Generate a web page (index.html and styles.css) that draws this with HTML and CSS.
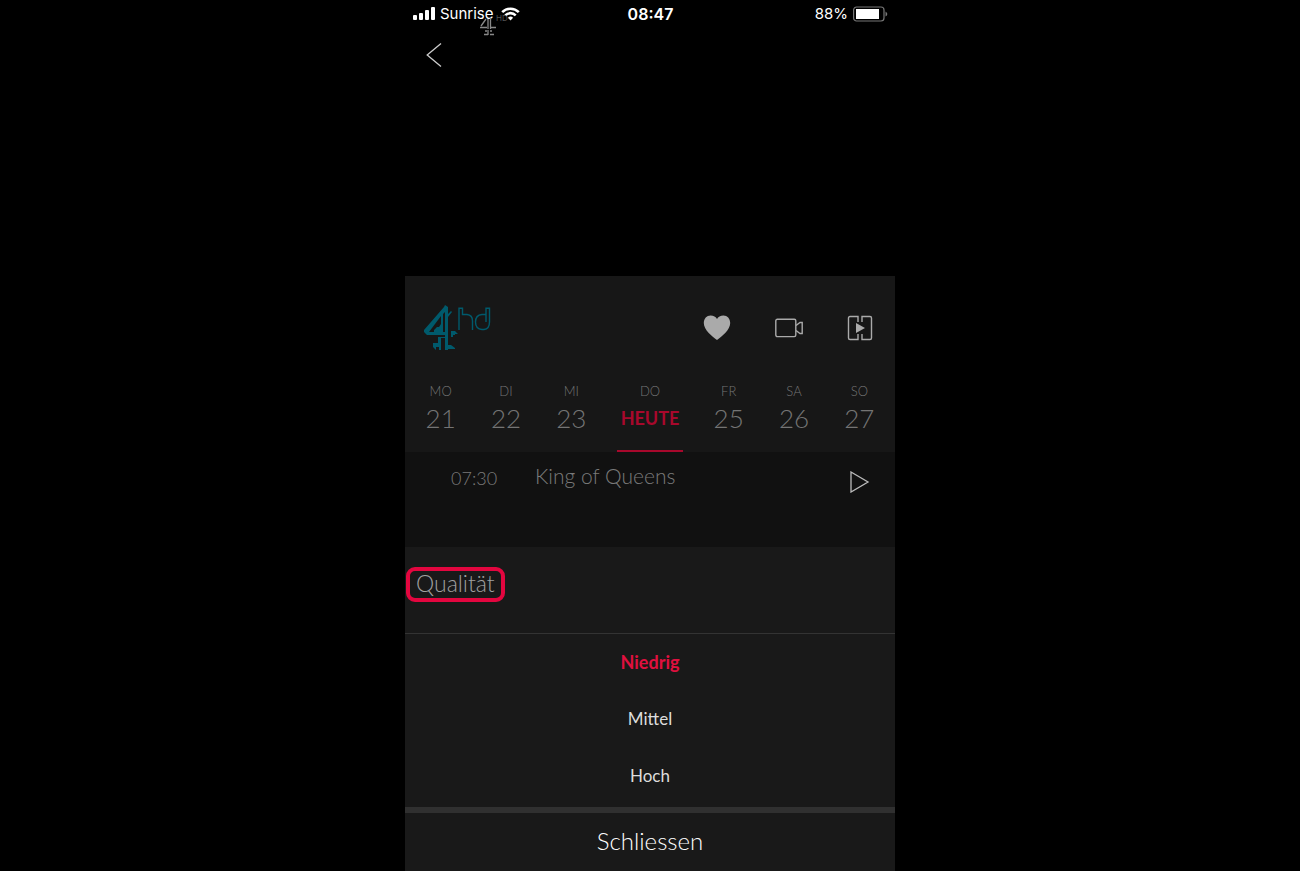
FILE: index.html
```html
<!DOCTYPE html>
<html lang="de">
<head>
  <meta charset="UTF-8">
  <title>Qualität</title>
  <meta name="viewport" content="width=device-width, initial-scale=1.0">
  <link rel="stylesheet" href="styles.css">
</head>
<body>
  <div class="phone">
    <div class="player">
      <div class="status-bar">
        <div class="status-left">
          <svg width="22" height="14" viewBox="0 0 22 14" fill="#fff">
            <rect x="0" y="8" width="4" height="5" rx="1"/>
            <rect x="6" y="6" width="4" height="7" rx="1"/>
            <rect x="12" y="3" width="4" height="10" rx="1"/>
            <rect x="18" y="0" width="4" height="13" rx="1"/>
          </svg>
          <span class="carrier">Sunrise</span>
          <svg class="wifi" width="19" height="14" viewBox="0 0 19 14" fill="none" stroke="#fff" stroke-width="2.6">
            <path d="M1.2 5.2a11.8 11.8 0 0 1 16.6 0"/>
            <path d="M4.3 8.3a7.4 7.4 0 0 1 10.4 0"/>
            <path d="M6.9 10.7a3.7 3.7 0 0 1 5.2 0L9.5 13.4z" fill="#fff" stroke="none"/>
          </svg>
        </div>
        <div class="clock">08:47</div>
        <div class="status-right">
          <span>88%</span>
          <svg width="35" height="16" viewBox="0 0 35 16">
            <rect x="0.6" y="1" width="30.4" height="14" rx="3" fill="none" stroke="#777" stroke-width="1.2"/>
            <rect x="3" y="3" width="23" height="10" fill="#fff"/>
            <path d="M32.5 5.5q1.8 1 1.8 2.5t-1.8 2.5z" fill="#777"/>
          </svg>
        </div>
      </div>
      <div class="watermark">
        <svg width="16" height="18" viewBox="0 0 16 18" fill="none" stroke="#888" stroke-width="1.3">
          <path d="M6 1L1 8M0 9.5h7M10.500 0v11M8 1v10M11 9.5h5M8 12v5M4 16.5h4M10 16.5h4M5 13h2M10 13h2"/>
        </svg>
        <span>HD</span>
      </div>
      <button class="icon-btn back-btn" aria-label="Zurück">
        <svg width="16" height="26" viewBox="0 0 16 26" fill="none" stroke="#ccc" stroke-width="1.3">
          <path d="M15 1.5L1.2 13L15 24.5"/>
        </svg>
      </button>
    </div>

    <div class="channel">
      <div class="channel-head">
        <svg class="channel-logo" width="68" height="48" viewBox="0 0 68 48" aria-label="4 hd">
          <g fill="#005a6c">
            <path d="M21 1L24 3V46H21V31H3L0 28V26L20 3zM17 12L5 28H21V8z" fill-rule="evenodd"/>
            <path d="M17 11L19 9V28H10V26L13 23H15L17 20zM24 10L27 7L28 8L24 13z"/>
            <path d="M27 27h4l3 3h-3v1h-2v2h-2zM24 41h3l4 3v1h-7zM14 33h7v1h-4v12h-2v-3h-3v3l-3-3v-4h5z"/>
          </g>
          <g fill="none" stroke="#005a6c" stroke-width="1.4">
            <path d="M35 26V4.3H38.5V10.5H43Q48.5 11 48.5 17V26"/>
            <path d="M62 10.5H58Q51.500 11 51.500 18T58 25.500H60Q65.500 25 65.500 18V4.300H62V18"/>
          </g>
        </svg>
        <div class="channel-actions">
          <button class="icon-btn" aria-label="Favorit">
            <svg width="28" height="26" viewBox="0 0 28 26">
              <path d="M14 25C9 21 0.8 15 0.8 8C0.8 3.5 3.8 0.5 7.5 0.5C10.5 0.5 13 2 14 4C15 2 17.5 0.5 20.5 0.5C24.2 0.5 27.2 3.5 27.2 8C27.2 15 19 21 14 25z" fill="#aaa"/>
            </svg>
          </button>
          <button class="icon-btn" aria-label="Aufnehmen">
            <svg width="28" height="20" viewBox="0 0 28 20" fill="none" stroke="#aaa" stroke-width="1.4">
              <rect x="0.8" y="1.2" width="20" height="17.4" rx="1.5"/>
              <path d="M21 7.5L25 4.5H27.2V15.5H25L21 12.5"/>
            </svg>
          </button>
          <button class="icon-btn" aria-label="Von Anfang an">
            <svg width="26" height="26" viewBox="0 0 26 26" fill="none" stroke="#aaa" stroke-width="1.4">
              <path d="M11 7V1.5H3Q1.5 1.5 1.5 3V23Q1.5 24.5 3 24.5H11V19M15 7V1.5H23Q24.5 1.5 24.5 3V23Q24.5 24.5 23 24.5H15V19"/>
              <path d="M9 8L18 13L9 18z" fill="#aaa" stroke="none"/>
            </svg>
          </button>
        </div>
      </div>
      <nav class="days">
        <a href="#" class="day"><span>MO</span><b>21</b></a>
        <a href="#" class="day"><span>DI</span><b>22</b></a>
        <a href="#" class="day"><span>MI</span><b>23</b></a>
        <a href="#" class="day today"><span>DO</span><b>HEUTE</b></a>
        <a href="#" class="day"><span>FR</span><b>25</b></a>
        <a href="#" class="day"><span>SA</span><b>26</b></a>
        <a href="#" class="day"><span>SO</span><b>27</b></a>
      </nav>
    </div>

    <div class="program">
      <div class="program-time">07:30</div>
      <div class="program-title">King of Queens</div>
      <button class="icon-btn" aria-label="Abspielen">
        <svg width="20" height="22" viewBox="0 0 20 22" fill="none" stroke="#bbb" stroke-width="1.3">
          <path d="M1 1L18 11L1 21z"/>
        </svg>
      </button>
    </div>

    <div class="sheet">
      <div class="sheet-head">
        <div class="sheet-title">Qualität</div>
      </div>
      <div class="options">
        <button class="option selected">Niedrig</button>
        <button class="option">Mittel</button>
        <button class="option">Hoch</button>
      </div>
      <button class="close-btn">Schliessen</button>
    </div>
  </div>
</body>
</html>
```
FILE: styles.css
```css
* {
  box-sizing: border-box;
}
body {
  margin: 0;
  background: #000;
  color: #fff;
  font-family: Lato, 'Liberation Sans', sans-serif;
  font-weight: 300;
}
button {
  background: none;
  border: none;
  padding: 0;
  color: inherit;
  font: inherit;
  cursor: pointer;
}
svg {
  display: block;
}
.phone {
  max-width: 490px;
  min-height: 100vh;
  margin: 0 auto;
  display: flex;
  flex-direction: column;
}
.player {
  position: relative;
  min-height: 276px;
}
.status-bar {
  display: grid;
  grid-template-columns: 1fr auto 1fr;
  align-items: center;
  height: 27px;
  padding: 0 7px 0 8px;
  font-family: Inter, sans-serif;
  font-size: 15px;
  font-weight: 400;
}
.status-left, .status-right {
  display: flex;
  align-items: center;
  gap: 5px;
}
.wifi {
  margin-left: 2px;
}
.status-right {
  justify-content: flex-end;
}
.clock {
  font-size: 16px;
  font-weight: 600;
}
.watermark {
  position: absolute;
  top: 18px;
  left: 75px;
  display: flex;
  font-family: Inter, sans-serif;
  font-size: 8px;
  font-weight: 400;
  line-height: 1;
  color: #555;
}
.watermark span {
  margin-top: -4px;
}
.icon-btn {
  display: flex;
  align-items: center;
  justify-content: center;
}
.back-btn {
  margin: 15px 0 0 21px;
}
.channel {
  background: #171717;
}
.channel-head {
  display: flex;
  justify-content: space-between;
  align-items: center;
  height: 104px;
  padding: 0 22px 0 19px;
}
.channel-actions {
  display: flex;
  gap: 44px;
}
.days {
  display: grid;
  grid-template-columns: repeat(3, minmax(0, 1fr)) 92px repeat(3, minmax(0, 1fr));
  justify-items: center;
  padding: 0 3px;
}
.day {
  display: flex;
  flex-direction: column;
  align-items: center;
  width: 100%;
  height: 72px;
  padding-top: 3px;
  color: #747474;
  font-size: 13px;
  line-height: 16px;
  text-decoration: none;
}
.day b {
  margin-top: 3px;
  font-size: 26px;
  font-weight: 300;
  line-height: 32px;
}
.day.today {
  width: 66px;
  border-bottom: 2px solid #a8082c;
}
.today b {
  color: #a8082c;
  font-size: 18px;
  font-weight: 700;
}
.program {
  display: flex;
  align-items: flex-start;
  height: 95px;
  padding: 12px 25px 0 46px;
  background: #111;
  color: #7a7a7a;
}
.program-time {
  width: 84px;
  font-size: 18px;
  line-height: 28px;
}
.program-title {
  flex: 1;
  font-size: 21px;
  line-height: 24px;
}
.program .icon-btn {
  margin-top: 7px;
}
.sheet {
  flex: 1;
  display: flex;
  flex-direction: column;
  background: #191919;
}
.sheet-head {
  display: flex;
  height: 87px;
  padding: 20px 1px;
  border-bottom: 1px solid #333;
}
.sheet-title {
  height: 35px;
  padding: 0 6px;
  border: 4px solid #e3063f;
  border-radius: 9px;
  color: #a0a0a0;
  font-size: 23px;
  line-height: 25px;
}
.options {
  display: flex;
  flex-direction: column;
  padding-bottom: 2px;
  border-bottom: 6px solid #303030;
}
.option {
  height: 57px;
  padding-bottom: 2px;
  font-size: 17px;
  font-weight: 400;
  color: #ddd;
}
.option.selected {
  color: #e0103f;
  font-size: 18px;
  font-weight: 700;
}
.close-btn {
  height: 58px;
  padding-bottom: 4px;
  font-size: 24px;
}
```
